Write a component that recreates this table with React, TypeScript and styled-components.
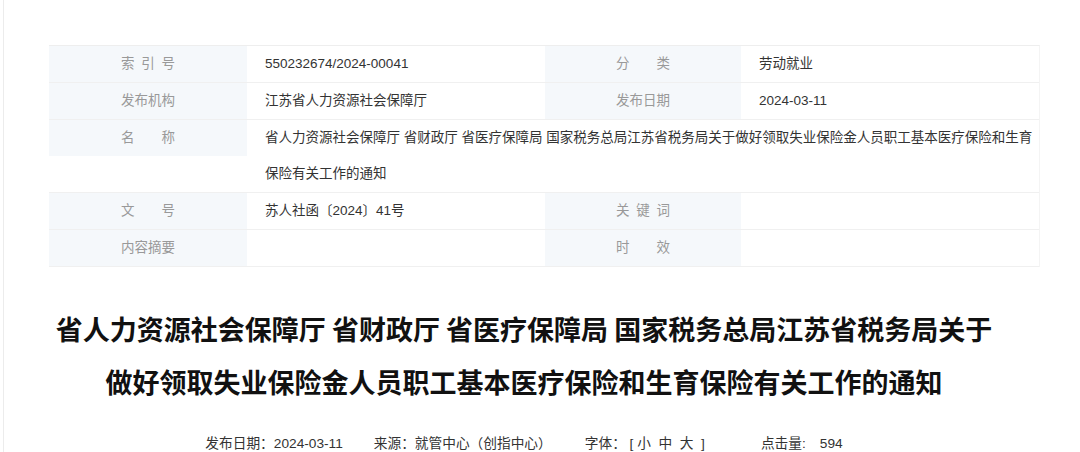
import styled, { createGlobalStyle } from 'styled-components';

const GlobalStyle = createGlobalStyle`
  html, body {
    margin: 0;
    padding: 0;
    background: #fff;
  }
  body {
    font-family: "Liberation Sans", "Noto Sans CJK SC", sans-serif;
    color: #333;
  }
`;

const Page = styled.div`
  margin-left: 3px;
  border-left: 1px solid #ececec;
  min-height: 452px;
  padding-top: 45px;
  box-sizing: border-box;
`;

const InfoTable = styled.div`
  margin-left: 45px;
  width: 990px;
  border-top: 1px solid #eeeeee;
  border-right: 1px solid #f4f4f4;
  display: grid;
  grid-template-columns: 198px 298px 196px 298px;
  font-size: 13.5px;
`;

const Label = styled.div<{ $tall?: boolean }>`
  background: ${(p) => (p.$tall ? 'transparent' : '#f5f8fb')};
  border-bottom: 1px solid #f0f0f0;
  color: #999;
  text-align: center;
  line-height: 36px;
  height: ${(p) => (p.$tall ? 'auto' : '36px')};
`;

const LabelBand = styled.div`
  background: #f5f8fb;
  height: 36px;
`;

const LabelText = styled.span`
  display: inline-block;
  width: 54px;
  text-align: justify;
  text-align-last: justify;
  vertical-align: top;
`;

const Value = styled.div<{ $span?: number }>`
  grid-column: span ${(p) => p.$span ?? 1};
  border-bottom: 1px solid #f0f0f0;
  padding: 0 0 0 18px;
  line-height: 36px;
  min-height: 36px;
  color: #333;
`;

const Title = styled.h1`
  margin: 35px 0 0 45px;
  width: 950px;
  text-align: center;
  font-size: 27px;
  line-height: 53px;
  font-weight: bold;
  color: #111;
  font-family: "Noto Sans CJK SC", sans-serif;
`;

const Meta = styled.div`
  margin: 26px 0 0 45px;
  width: 950px;
  display: flex;
  justify-content: center;
  font-size: 13.7px;
  line-height: 20px;
  color: #333;
`;

const MetaItem = styled.span<{ $gap: number }>`
  margin-right: ${(p) => p.$gap}px;
  white-space: pre;
`;

type Row = { label: string; value: string; label2?: string; value2?: string };

const rows: Row[] = [
  { label: '索引号', value: '550232674/2024-00041', label2: '分类', value2: '劳动就业' },
  { label: '发布机构', value: '江苏省人力资源社会保障厅', label2: '发布日期', value2: '2024-03-11' },
];

const rowsAfter: Row[] = [
  { label: '文号', value: '苏人社函〔2024〕41号', label2: '关键词', value2: '' },
  { label: '内容摘要', value: '', label2: '时效', value2: '' },
];

const fullName =
  '省人力资源社会保障厅 省财政厅 省医疗保障局 国家税务总局江苏省税务局关于做好领取失业保险金人员职工基本医疗保险和生育保险有关工作的通知';

function renderRow(r: Row) {
  return [
    <Label key={r.label}>
      <LabelText>{r.label}</LabelText>
    </Label>,
    <Value key={r.label + 'v'}>{r.value}</Value>,
    <Label key={r.label2}>
      <LabelText>{r.label2}</LabelText>
    </Label>,
    <Value key={r.label2 + 'v'}>{r.value2}</Value>,
  ];
}

export default function App() {
  return (
    <>
      <GlobalStyle />
      <Page>
        <InfoTable>
          {rows.map(renderRow)}
          <Label $tall>
            <LabelBand>
              <LabelText>名称</LabelText>
            </LabelBand>
          </Label>
          <Value $span={3}>{fullName}</Value>
          {rowsAfter.map(renderRow)}
        </InfoTable>
        <Title>
          省人力资源社会保障厅 省财政厅 省医疗保障局 国家税务总局江苏省税务局关于做好领取失业保险金人员职工基本医疗保险和生育保险有关工作的通知
        </Title>
        <Meta>
          <MetaItem $gap={31}>发布日期：2024-03-11</MetaItem>
          <MetaItem $gap={33}>来源：就管中心（创指中心）</MetaItem>
          <MetaItem $gap={56}>字体： [ 小  中  大  ]</MetaItem>
          <MetaItem $gap={14}>点击量:</MetaItem>
          <MetaItem $gap={0}>594</MetaItem>
        </Meta>
      </Page>
    </>
  );
}
